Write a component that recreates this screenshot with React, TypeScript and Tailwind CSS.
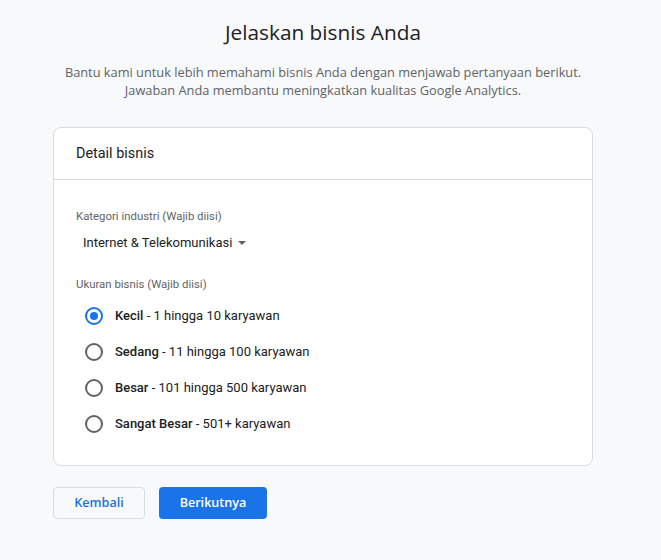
export default function App() {
  const sizes = [
    { name: "Kecil", desc: "1 hingga 10 karyawan" },
    { name: "Sedang", desc: "11 hingga 100 karyawan" },
    { name: "Besar", desc: "101 hingga 500 karyawan" },
    { name: "Sangat Besar", desc: "501+ karyawan" },
  ];
  const selected = 0;

  return (
    <div className="min-h-[560px] bg-[#f8f9fa] font-['Roboto',sans-serif] text-[#202124]">
      <div className="w-[540px] ml-[53px] pt-[18px]">
        <h1 className="text-center text-[20.8px] leading-[28px] font-['Open_Sans',sans-serif] font-normal text-[#202124]">
          Jelaskan bisnis Anda
        </h1>
        <p className="mt-[17px] text-center text-[12.8px] leading-[18px] text-[#5f6368] font-['Open_Sans',sans-serif] -mx-[20px]">
          Bantu kami untuk lebih memahami bisnis Anda dengan menjawab pertanyaan berikut.
          <br />
          Jawaban Anda membantu meningkatkan kualitas Google Analytics.
        </p>

        <div className="mt-[28px] bg-white border border-[#dadce0] rounded-[8px]">
          <div className="h-[52px] flex items-center px-[22px] border-b border-[#dadce0]">
            <span className="text-[14.4px] text-[#202124]">Detail bisnis</span>
          </div>
          <div className="px-[22px] pt-[28px] pb-[31px]">
            <div className="text-[11.4px] leading-[16px] text-[#5f6368]">Kategori industri (Wajib diisi)</div>
            <div className="mt-[9px] ml-[7px] flex items-center gap-[6px] text-[13px] leading-[20px]">
              <span>Internet &amp; Telekomunikasi</span>
              <svg width="8" height="4" viewBox="0 0 8 4">
                <path d="M0 0 L4 4 L8 0 Z" fill="#5f6368" />
              </svg>
            </div>
            <div className="mt-[23px] text-[11.4px] leading-[16px] text-[#5f6368]">Ukuran bisnis (Wajib diisi)</div>
            <div className="mt-[14px] flex flex-col gap-[16px]">
              {sizes.map((s, i) => (
                <label key={s.name} className="flex items-center h-[20px] ml-[9px] gap-[12px]">
                  {i === selected ? (
                    <span className="w-[18px] h-[18px] rounded-full border-2 border-[#1a73e8] flex items-center justify-center">
                      <span className="w-[8px] h-[8px] rounded-full bg-[#1a73e8]" />
                    </span>
                  ) : (
                    <span className="w-[18px] h-[18px] rounded-full border-2 border-[#5f6368]" />
                  )}
                  <span className="text-[13px] text-[#202124]">
                    <span className="font-medium">{s.name}</span> - {s.desc}
                  </span>
                </label>
              ))}
            </div>
          </div>
        </div>

        <div className="mt-[21px] flex gap-[14px]">
          <button className="h-[32px] w-[92px] rounded-[4px] border border-[#dadce0] bg-[#f8f9fa] text-[#1a73e8] text-[12.6px] font-semibold font-['Open_Sans',sans-serif]">
            Kembali
          </button>
          <button className="h-[32px] w-[108px] rounded-[4px] bg-[#1a73e8] text-white text-[12.6px] font-semibold font-['Open_Sans',sans-serif]">
            Berikutnya
          </button>
        </div>
      </div>
    </div>
  );
}
